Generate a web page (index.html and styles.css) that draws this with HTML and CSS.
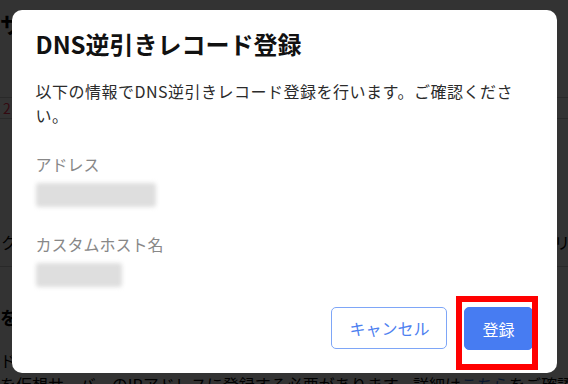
FILE: index.html
```html
<!DOCTYPE html>
<html lang="ja">
<head>
  <meta charset="UTF-8" />
  <meta name="viewport" content="width=device-width, initial-scale=1.0" />
  <title>DNS逆引きレコード登録</title>
  <link rel="stylesheet" href="styles.css">
</head>
<body>
  <main class="page">
    <h1 class="page-title">サーバー詳細</h1>
    <div class="summary-row"><span class="count">2</span></div>
    <div class="info-row">
      <span class="info-text">クラウドサーバーのDNS逆引きレコードを設定できます。</span>
      <span class="info-side">リ</span>
    </div>
    <h2 class="section-title">を設定する</h2>
    <p class="desc">ドメイン名の逆引き設定を行うには、事前にPTRレコード</p>
    <p class="desc">を仮想サーバーのIPアドレスに登録する必要があります。詳細は<a href="#">こちら</a>をご確認ください。</p>
  </main>

  <div class="overlay">
    <div class="dialog">
      <h2 class="dialog-title">DNS逆引きレコード登録</h2>
      <p class="dialog-text">以下の情報でDNS逆引きレコード登録を行います。ご確認ください。</p>

      <div class="field">
        <div class="field-label">アドレス</div>
        <div class="field-value wide"></div>
      </div>
      <div class="field">
        <div class="field-label">カスタムホスト名</div>
        <div class="field-value narrow"></div>
      </div>

      <div class="actions">
        <button class="btn btn-cancel">キャンセル</button>
        <div class="confirm-wrap">
          <button class="btn btn-primary">登録</button>
          <div class="highlight"></div>
        </div>
      </div>
    </div>
  </div>
</body>
</html>
```

FILE: styles.css
```css
html, body {
  margin: 0;
  overflow: hidden;
}
body {
  font-family: "Noto Sans CJK JP", "Noto Sans", sans-serif;
  background: #fff;
  color: #000;
  width: 568px;
  height: 384px;
}
.page {
  font-size: 16px;
}
.page-title {
  margin: 10px 0 0;
  font-size: 22px;
  line-height: 26px;
  font-weight: bold;
}
.summary-row {
  margin-top: 61px;
  border-top: 1px solid #ccc;
  border-bottom: 1px solid #ccc;
  line-height: 19px;
  padding-left: 3px;
}
.count {
  color: #ff3355;
  font-size: 14px;
}
.info-row {
  display: flex;
  margin-top: 111px;
  line-height: 24px;
  padding: 0 0 12px 1px;
  border-bottom: 1px solid #ccc;
}
.info-text {
  flex: 1;
  white-space: nowrap;
  overflow: hidden;
}
.info-side {
  width: 14px;
  white-space: nowrap;
}
.section-title {
  margin: 38px 0 0;
  font-size: 18px;
  line-height: 24px;
}
.desc {
  margin: 0;
  line-height: 24px;
  white-space: nowrap;
}
.desc:first-of-type {
  margin-top: 19px;
}
.desc a {
  color: #2a6fe0;
  text-decoration: none;
}

.overlay {
  position: fixed;
  inset: 0;
  background: rgba(0, 0, 0, 0.8);
  display: flex;
  justify-content: center;
  align-items: flex-start;
  padding-top: 10px;
}
.dialog {
  width: 545px;
  box-sizing: border-box;
  background: #fff;
  border-radius: 10px;
  padding: 20px 24px 23px;
}
.dialog-title {
  margin: 0;
  font-size: 24px;
  line-height: 28.6px;
  font-weight: bold;
  color: #111;
}
.dialog-text {
  margin: 20px 8px 0 0;
  font-size: 16px;
  line-height: 24.8px;
  letter-spacing: 0.5px;
  color: #2b2b2b;
}
.field {
  margin-top: 24px;
}
.field + .field {
  margin-top: 25px;
}
.field-label {
  font-size: 16px;
  line-height: 24px;
  color: #888;
}
.field-value {
  margin-top: 7px;
  height: 24px;
  background: #dedede;
  border-radius: 3px;
  filter: blur(2px);
}
.field-value.wide {
  width: 120px;
}
.field-value.narrow {
  width: 86px;
}
.actions {
  display: flex;
  justify-content: flex-end;
  align-items: flex-start;
  gap: 17px;
  margin-top: 20px;
}
.btn {
  font-family: inherit;
  font-size: 16px;
  height: 43px;
  padding: 0 17px;
  border-radius: 5px;
  cursor: pointer;
}
.btn-cancel {
  background: #fff;
  color: #4d80f0;
  border: 1px solid #7ea6f7;
  height: 42px;
}
.btn-primary {
  background: #477cf2;
  color: #fff;
  border: 1px solid #477cf2;
}
.confirm-wrap {
  position: relative;
}
.highlight {
  position: absolute;
  left: -8px;
  top: -11px;
  width: 82px;
  height: 74px;
  box-sizing: border-box;
  border: 6px solid #ff0000;
  pointer-events: none;
}
```
